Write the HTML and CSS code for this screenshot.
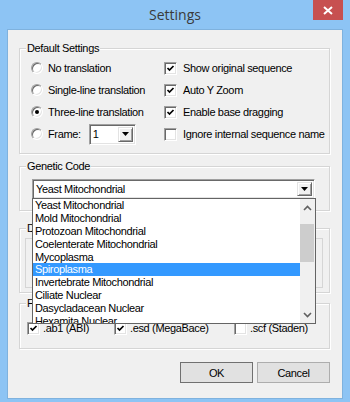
FILE: index.html
```html
<!DOCTYPE html>
<html lang="en">
<head>
    <meta charset="UTF-8">
    <meta name="viewport" content="width=device-width, initial-scale=1.0">
    <title>Settings</title>
    <link rel="stylesheet" href="styles.css">
</head>
<body>
    <div class="window">
        <div class="titlebar">
            <span class="title">Settings</span>
            <span class="close">
                <svg width="10" height="9" viewBox="0 0 10 9"><path d="M1 1 L9 8 M9 1 L1 8" stroke="#fff" stroke-width="2"/></svg>
            </span>
        </div>

        <div class="client">
            <div class="group defaults">
                <span class="group-label">Default Settings</span>
                <div class="options">
                    <label class="opt"><span class="radio"></span>No translation</label>
                    <label class="opt"><span class="check"><svg viewBox="0 0 9 9"><polyline points="1.5,4 3.5,6 7.5,2"/></svg></span>Show original sequence</label>

                    <label class="opt"><span class="radio"></span>Single-line translation</label>
                    <label class="opt"><span class="check"><svg viewBox="0 0 9 9"><polyline points="1.5,4 3.5,6 7.5,2"/></svg></span>Auto Y Zoom</label>

                    <label class="opt"><span class="radio on"></span>Three-line translation</label>
                    <label class="opt"><span class="check"><svg viewBox="0 0 9 9"><polyline points="1.5,4 3.5,6 7.5,2"/></svg></span>Enable base dragging</label>

                    <label class="opt"><span class="radio"></span>Frame:
                        <span class="combo small">
                            <span class="combo-text">1</span>
                            <span class="combo-btn"><svg width="7" height="4" viewBox="0 0 7 4"><path d="M0 0 H7 L3.5 4 Z"/></svg></span>
                        </span>
                    </label>
                    <label class="opt"><span class="check"></span>Ignore internal sequence name</label>
                </div>
            </div>

            <div class="group code">
                <span class="group-label">Genetic Code</span>
                <div class="combo wide">
                    <span class="combo-text">Yeast Mitochondrial</span>
                    <span class="combo-btn"><svg width="7" height="4" viewBox="0 0 7 4"><path d="M0 0 H7 L3.5 4 Z"/></svg></span>

                    <div class="dropdown">
                        <ul class="items">
                            <li>Yeast Mitochondrial</li>
                            <li>Mold Mitochondrial</li>
                            <li>Protozoan Mitochondrial</li>
                            <li>Coelenterate Mitochondrial</li>
                            <li>Mycoplasma</li>
                            <li class="selected">Spiroplasma</li>
                            <li>Invertebrate Mitochondrial</li>
                            <li>Ciliate Nuclear</li>
                            <li>Dasycladacean Nuclear</li>
                            <li>Hexamita Nuclear</li>
                        </ul>
                        <div class="scrollbar">
                            <span class="arrow"><svg width="9" height="6" viewBox="0 0 9 6"><polyline points="1,5 4.5,1.5 8,5"/></svg></span>
                            <span class="track"><span class="thumb"></span></span>
                            <span class="arrow"><svg width="9" height="6" viewBox="0 0 9 6"><polyline points="1,1 4.5,4.5 8,1"/></svg></span>
                        </div>
                    </div>
                </div>
            </div>

            <div class="group display">
                <span class="group-label">Display</span>
                <div class="inner-box"></div>
            </div>

            <div class="group files">
                <span class="group-label">File Types</span>
                <div class="file-row">
                    <label class="opt"><span class="check"><svg viewBox="0 0 9 9"><polyline points="1.5,4 3.5,6 7.5,2"/></svg></span>.ab1 (ABI)</label>
                    <label class="opt"><span class="check"><svg viewBox="0 0 9 9"><polyline points="1.5,4 3.5,6 7.5,2"/></svg></span>.esd (MegaBace)</label>
                    <label class="opt"><span class="check"></span>.scf (Staden)</label>
                </div>
            </div>

            <div class="buttons">
                <button class="btn default">OK</button>
                <button class="btn">Cancel</button>
            </div>
        </div>
    </div>
</body>
</html>
```

FILE: styles.css
```css
body {
    margin: 0;
    font-family: "Liberation Sans", Arial, sans-serif;
    font-size: 11px;
    letter-spacing: -0.35px;
    color: #000;
}
.window {
    width: 350px;
    height: 402px;
    box-sizing: border-box;
    padding-bottom: 4px;
    background: #8dc4f4;
    display: flex;
    flex-direction: column;
}
.titlebar {
    height: 30px;
    flex-shrink: 0;
    display: grid;
    grid-template-columns: 1fr auto 1fr;
}
.title {
    grid-column: 2;
    align-self: center;
    font-family: "Open Sans", sans-serif;
    font-size: 14px;
    letter-spacing: 0;
    color: #3a3a3a;
    margin-top: -1px;
}
.close {
    grid-column: 3;
    justify-self: end;
    align-self: start;
    margin-right: 7px;
    width: 30px;
    height: 20px;
    background: #c75050;
    display: flex;
    align-items: center;
    justify-content: center;
}
.client {
    flex: 1;
    margin: 0 8px;
    background: #f0f0f0;
    padding: 18px 12px 0 11px;
    box-shadow: 0 0 0 1px #7fb2de;
}

/* group boxes */
.group {
    position: relative;
    box-sizing: border-box;
    border: 1px solid #d5d5d5;
    box-shadow: inset 1px 1px #fff, 1px 1px #fff;
}
.group-label {
    position: absolute;
    top: -7px;
    left: 6px;
    padding: 0 1px;
    line-height: 13px;
    background: #f0f0f0;
    white-space: nowrap;
}
.defaults {
    height: 106px;
    padding: 8px 0 0 11px;
}
.options {
    display: grid;
    grid-template-columns: 133px 1fr;
    grid-auto-rows: 22px;
}
.opt {
    display: flex;
    align-items: center;
    white-space: nowrap;
}

.radio {
    width: 12px;
    height: 12px;
    box-sizing: border-box;
    border-radius: 50%;
    border: 1px solid;
    border-color: #a0a0a0 #fff #fff #a0a0a0;
    box-shadow: inset 1px 1px #696969, inset -1px -1px #e3e3e3;
    background: #fff;
    margin-right: 5px;
    display: flex;
    align-items: center;
    justify-content: center;
}
.radio.on::after {
    content: "";
    width: 4px;
    height: 4px;
    border-radius: 50%;
    background: #000;
}
.check {
    width: 13px;
    height: 13px;
    box-sizing: border-box;
    border: 1px solid;
    border-color: #a0a0a0 #fff #fff #a0a0a0;
    box-shadow: inset 1px 1px #696969, inset -1px -1px #e3e3e3;
    background: #fff;
    margin-right: 6px;
    padding: 1px;
    flex-shrink: 0;
}
.check svg {
    display: block;
    width: 9px;
    height: 9px;
}
.check polyline {
    fill: none;
    stroke: #000;
    stroke-width: 1.7;
}

/* combo boxes */
.combo {
    position: relative;
    display: flex;
    align-items: center;
    box-sizing: border-box;
    background: #fff;
    border: 1px solid;
    border-color: #a0a0a0 #fff #fff #a0a0a0;
    box-shadow: inset 1px 1px #696969, inset -1px -1px #e3e3e3;
    padding: 2px 2px 2px 3px;
}
.combo.small {
    width: 47px;
    height: 21px;
    margin-left: 8px;
}
.combo.wide {
    height: 20px;
}
.combo-text {
    flex: 1;
}
.combo-btn {
    width: 15px;
    align-self: stretch;
    box-sizing: border-box;
    background: #f0f0f0;
    border: 1px solid;
    border-color: #e3e3e3 #696969 #696969 #e3e3e3;
    box-shadow: inset 1px 1px #fff, inset -1px -1px #a0a0a0;
    display: flex;
    align-items: center;
    justify-content: center;
}

.code {
    margin-top: 12px;
    height: 45px;
    padding: 12px 14px 0 12px;
}
.dropdown {
    position: absolute;
    z-index: 10;
    top: 100%;
    left: -1px;
    right: -2px;
    height: 126px;
    box-sizing: border-box;
    background: #fff;
    border: 1px solid #646464;
    display: flex;
    overflow: hidden;
}
.items {
    flex: 1;
    list-style: none;
    margin: 0;
    padding: 0;
}
.items li {
    height: 12.9px;
    line-height: 12.9px;
    padding-left: 2px;
    white-space: nowrap;
}
.items li.selected {
    background: #3399ff;
    color: #fff;
}
.scrollbar {
    width: 15px;
    background: #f0f0f0;
    display: flex;
    flex-direction: column;
}
.arrow {
    height: 17px;
    display: flex;
    align-items: center;
    justify-content: center;
}
.arrow polyline {
    fill: none;
    stroke: #606060;
    stroke-width: 1.6;
}
.track {
    flex: 1;
    padding-top: 8px;
}
.thumb {
    display: block;
    height: 38px;
    margin-right: 1px;
    background: #cdcdcd;
}

.display {
    margin-top: 17px;
    height: 65px;
    padding: 9px 6px 0 5px;
}
.inner-box {
    height: 48px;
    border: 1px solid #d5d5d5;
}
.files {
    margin-top: 10px;
    height: 46px;
    padding: 17px 8px 0 7px;
}
.file-row {
    display: grid;
    grid-template-columns: 87px 120px auto;
    height: 14px;
}
.file-row .check {
    margin-right: 3px;
}

.buttons {
    display: flex;
    justify-content: flex-end;
    gap: 4px;
    margin-top: 13px;
}
.btn {
    width: 73px;
    height: 21px;
    font-family: "Liberation Sans", Arial, sans-serif;
    font-size: 11px;
    letter-spacing: -0.35px;
    background: #e1e1e1;
    border: 1px solid #adadad;
    padding: 0;
}
.btn.default {
    border-color: #707070;
}
```
